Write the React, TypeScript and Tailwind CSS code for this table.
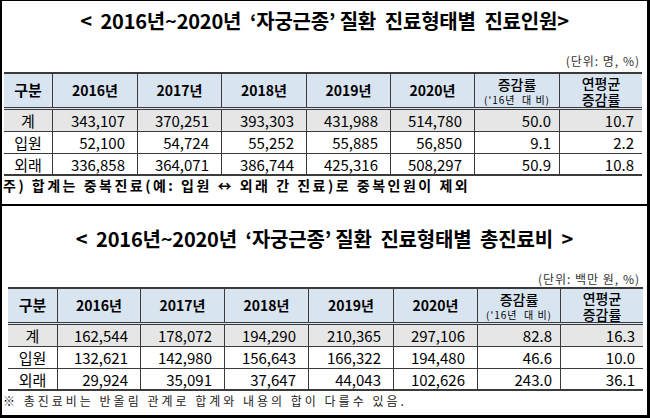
const years = ['2016년', '2017년', '2018년', '2019년', '2020년'];

type Row = { label: string; values: string[]; total?: boolean };

const patients: Row[] = [
  { label: '계', values: ['343,107', '370,251', '393,303', '431,988', '514,780', '50.0', '10.7'], total: true },
  { label: '입원', values: ['52,100', '54,724', '55,252', '55,885', '56,850', '9.1', '2.2'] },
  { label: '외래', values: ['336,858', '364,071', '386,744', '425,316', '508,297', '50.9', '10.8'] },
];

const costs: Row[] = [
  { label: '계', values: ['162,544', '178,072', '194,290', '210,365', '297,106', '82.8', '16.3'], total: true },
  { label: '입원', values: ['132,621', '142,980', '156,643', '166,322', '194,480', '46.6', '10.0'] },
  { label: '외래', values: ['29,924', '35,091', '37,647', '44,043', '102,626', '243.0', '36.1'] },
];

function StatTable({ rows, cols }: { rows: Row[]; cols: string }) {
  return (
    <div className="text-black">
      {/* 헤더 */}
      <div className={`grid ${cols} h-[38px] border-t-2 border-b-[3px] border-double border-[#3a3a3a] bg-[#d9e4f1]`}>
        <div className="flex items-center justify-center text-[15px] font-bold">구분</div>
        {years.map((y) => (
          <div key={y} className="flex items-center justify-center border-l border-[#3a3a3a] text-[14px] font-bold">
            {y}
          </div>
        ))}
        <div className="flex flex-col items-center justify-center border-l border-[#3a3a3a]">
          <span className="text-[14px] font-medium leading-[15px]">증감률</span>
          <span className="mt-[2px] text-[10px] leading-[11px] tracking-[1px]">('16년&nbsp;&nbsp;대 비)</span>
        </div>
        <div className="flex flex-col items-center justify-center border-l border-[#3a3a3a] text-[14px] font-medium leading-[16px]">
          <span>연평균</span>
          <span>증감률</span>
        </div>
      </div>

      {/* 데이터 */}
      {rows.map((r, i) => (
        <div
          key={r.label}
          className={`grid ${cols} h-[22px] border-[#3a3a3a] ${i === rows.length - 1 ? 'border-b-2' : 'border-b'} ${r.total ? 'bg-[#e6e6e6]' : 'bg-white'}`}
        >
          <div className="flex items-center justify-center text-[15px] leading-none">{r.label}</div>
          {r.values.map((v, j) => (
            <div
              key={j}
              className={`flex items-center justify-end border-l border-[#3a3a3a] text-[15px] leading-none ${j < 5 ? 'pr-[12px]' : 'pr-[8px]'}`}
            >
              {v}
            </div>
          ))}
        </div>
      ))}
    </div>
  );
}

export default function App() {
  return (
    <div className="w-[650px] h-[420px] bg-white font-['Noto_Sans_CJK_KR',sans-serif]">
      <div className="h-[418px] border-l-2 border-r-[3px] border-t border-b-[3px] border-black flex flex-col">
        {/* 진료인원 */}
        <div className="h-[205px] border-b-2 border-black">
          <div className="h-[40px] flex items-center justify-center text-[20px] font-bold tracking-[-0.2px]">
            &lt;&nbsp;&nbsp;2016년~2020년&nbsp;&nbsp;‘자궁근종’&nbsp;질환&nbsp;&nbsp;진료형태별&nbsp;&nbsp;진료인원&gt;
          </div>
          <div className="h-[31px] flex items-end justify-end pr-[7px] pb-[4px] text-[12px] leading-[14px] tracking-[1px] text-[#333]">
            (단위:&nbsp;명,&nbsp;%)
          </div>
          <div className="ml-[2px] w-[638px]">
            <StatTable rows={patients} cols="grid-cols-[48px_85px_84px_85px_84px_84px_85px_83px]" />
          </div>
          <div className="pl-[1px] pt-[1px] text-[14px] font-bold tracking-[2.5px] leading-[16px]">
            주) 합계는 중복진료(예: 입원 ↔ 외래 간 진료)로 중복인원이 제외
          </div>
        </div>

        {/* 총진료비 */}
        <div className="flex-1">
          <div className="h-[66px] flex items-center justify-center text-[20px] font-bold tracking-[-0.2px]">
            &lt;&nbsp;&nbsp;2016년~2020년&nbsp;&nbsp;‘자궁근종’&nbsp;질환&nbsp;&nbsp;진료형태별&nbsp;&nbsp;총진료비&nbsp;&nbsp;&gt;
          </div>
          <div className="h-[15px] flex items-start justify-end pr-[7px] text-[12px] leading-[14px] tracking-[1px] text-[#333]">
            (단위:&nbsp;백만&nbsp;원,&nbsp;%)
          </div>
          <div className="ml-[6px] w-[635px]">
            <StatTable rows={costs} cols="grid-cols-[49px_83px_84px_84px_85px_84px_83px_83px]" />
          </div>
          <div className="pl-[1px] pt-[2px] text-[12px] tracking-[3px] leading-[15px] text-[#222]">
            ※ 총진료비는 반올림 관계로 합계와 내용의 합이 다를수 있음.
          </div>
        </div>
      </div>
    </div>
  );
}
